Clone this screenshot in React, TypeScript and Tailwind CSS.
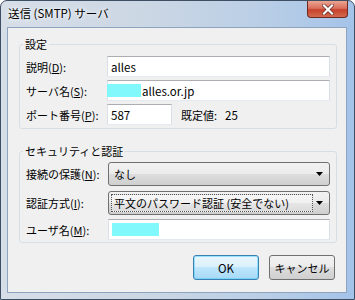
import React from "react";

function TextBox({ className = "", children }: { className?: string; children?: React.ReactNode }) {
  return (
    <div
      className={`h-[21px] bg-white border border-t-[#abadb3] border-x-[#dbdfe6] border-b-[#e3e9ef] flex items-center text-[11.5px] leading-[16px] ${className}`}
    >
      {children}
    </div>
  );
}

function Arrow() {
  return (
    <svg width="7" height="4" viewBox="0 0 7 4" className="absolute right-[6px] top-1/2 -translate-y-1/2">
      <polygon points="0,0 7,0 3.5,4" fill="#000" />
    </svg>
  );
}

function Row({ label, u, children, lw }: { label: string; u: string; children: React.ReactNode; lw: string }) {
  return (
    <div className="flex items-center">
      <div className={`${lw} shrink-0 text-[11px] leading-[16px] text-black whitespace-nowrap`}>
        {label}(<span className="underline">{u}</span>):
      </div>
      {children}
    </div>
  );
}

const comboBg =
  "bg-[linear-gradient(to_bottom,#f2f2f2_0%,#ebebeb_50%,#dddddd_50%,#cfcfcf_100%)]";

export default function App() {
  return (
    <div className="w-[355px] h-[300px] font-['Noto_Sans_CJK_JP','Noto_Sans',sans-serif] text-black">
      <div className="w-[355px] h-[300px] flex flex-col border border-[#3f4f63] rounded-t-[7px] bg-[linear-gradient(90deg,#d6dee8_0%,#ccd7e4_40%,#b9cee6_75%,#a4c3e9_100%)]">
        {/* title bar */}
        <div className="h-[26px] flex items-start shrink-0">
          <div className="pl-[7px] pt-[4px] text-[11.5px] leading-[16px] text-[#000] [text-shadow:0_0_6px_#ffffff,0_0_3px_#ffffff] whitespace-nowrap">
            送信 (SMTP) サーバ
          </div>
          <div className="ml-auto mr-[6px] w-[41px] h-[17px] rounded-b-[4px] border border-t-0 border-[#6e2a22] bg-[linear-gradient(to_bottom,#eba592_0%,#d9705e_45%,#c8412b_55%,#d26a4f_100%)] flex items-center justify-center">
            <svg width="12" height="11" viewBox="0 0 12 11">
              <path d="M2 1.5 L10 9.5 M10 1.5 L2 9.5" stroke="#5a2a22" strokeWidth="3.6" strokeLinecap="square" />
              <path d="M2 1.5 L10 9.5 M10 1.5 L2 9.5" stroke="#ffffff" strokeWidth="2.2" strokeLinecap="square" />
            </svg>
          </div>
        </div>

        {/* client area */}
        <div className="flex-1 ml-[6px] mr-[7px] mb-[6px] border border-[#8ea3bd] bg-[#f0f0f0] pl-[11px] pr-[9px] pt-[8px] flex flex-col">
          <fieldset className="border border-[#d5dfe5] rounded-[3px] p-0 m-0 min-w-0">
            <legend className="ml-[3px] px-[2px] text-[11px] leading-[16px]">設定</legend>
            <div className="pl-[6px] pr-[6px] pt-[4px] pb-[3px] flex flex-col gap-[3px]">
              <Row label="説明" u="D" lw="w-[81px]">
                <TextBox className="flex-1 pl-[3px]">alles</TextBox>
              </Row>
              <Row label="サーバ名" u="S" lw="w-[81px]">
                <TextBox className="flex-1">
                  <span className="w-[34px] h-[13px] bg-[#80f8fc] -ml-[1px] mr-[1px]" />
                  alles.or.jp
                </TextBox>
              </Row>
              <Row label="ポート番号" u="P" lw="w-[81px]">
                <TextBox className="w-[65px] pl-[3px]">587</TextBox>
                <span className="ml-[9px] text-[11px] leading-[16px]">既定値:</span>
                <span className="ml-[8px] text-[11.5px] leading-[16px]">25</span>
              </Row>
            </div>
          </fieldset>

          <fieldset className="mt-[14px] border border-[#d5dfe5] rounded-[3px] p-0 m-0 min-w-0">
            <legend className="ml-[3px] px-[2px] text-[11px] leading-[16px]">セキュリティと認証</legend>
            <div className="pl-[6px] pr-[6px] pt-[3px] pb-[2px] flex flex-col">
              <Row label="接続の保護" u="N" lw="w-[82px]">
                <div className={`relative flex-1 h-[24px] rounded-[3px] border border-[#707070] ${comboBg} flex items-center pl-[5px] text-[11px] leading-[16px]`}>
                  なし
                  <Arrow />
                </div>
              </Row>
              <div className="mt-[5px]">
                <Row label="認証方式" u="I" lw="w-[82px]">
                  <div className={`relative flex-1 h-[24px] rounded-[3px] border border-[#707070] ${comboBg} flex items-center p-[2px] text-[11px] leading-[16px]`}>
                    <div className="h-full w-[202px] border border-dotted border-[#555] bg-[linear-gradient(to_bottom,#f7f7f7_0%,#f0f0f0_50%,#e6e6e6_50%,#dcdcdc_100%)] flex items-center pl-[2px] whitespace-nowrap">
                      平文のパスワード認証 (安全でない)
                    </div>
                    <Arrow />
                  </div>
                </Row>
              </div>
              <div className="mt-[4px]">
                <Row label="ユーザ名" u="M" lw="w-[82px]">
                  <TextBox className="flex-1 pl-[3px]">
                    <span className="w-[47px] h-[13px] bg-[#80f8fc]" />
                  </TextBox>
                </Row>
              </div>
            </div>
          </fieldset>

          <div className="mt-[12px] flex justify-end gap-[10px] pr-[2px]">
            <button className="w-[66px] h-[25px] rounded-[3px] border border-[#3c7fb1] bg-[linear-gradient(to_bottom,#eaf6fd_0%,#d9f0fc_50%,#bee6fd_50%,#a7d9f5_100%)] text-[11.5px] leading-[16px] shadow-[inset_0_0_0_1px_#48d0ff80] whitespace-nowrap">
              OK
            </button>
            <button className={`w-[66px] h-[25px] rounded-[3px] border border-[#707070] ${comboBg} text-[11px] leading-[16px] whitespace-nowrap`}>
              キャンセル
            </button>
          </div>
        </div>
      </div>
    </div>
  );
}
